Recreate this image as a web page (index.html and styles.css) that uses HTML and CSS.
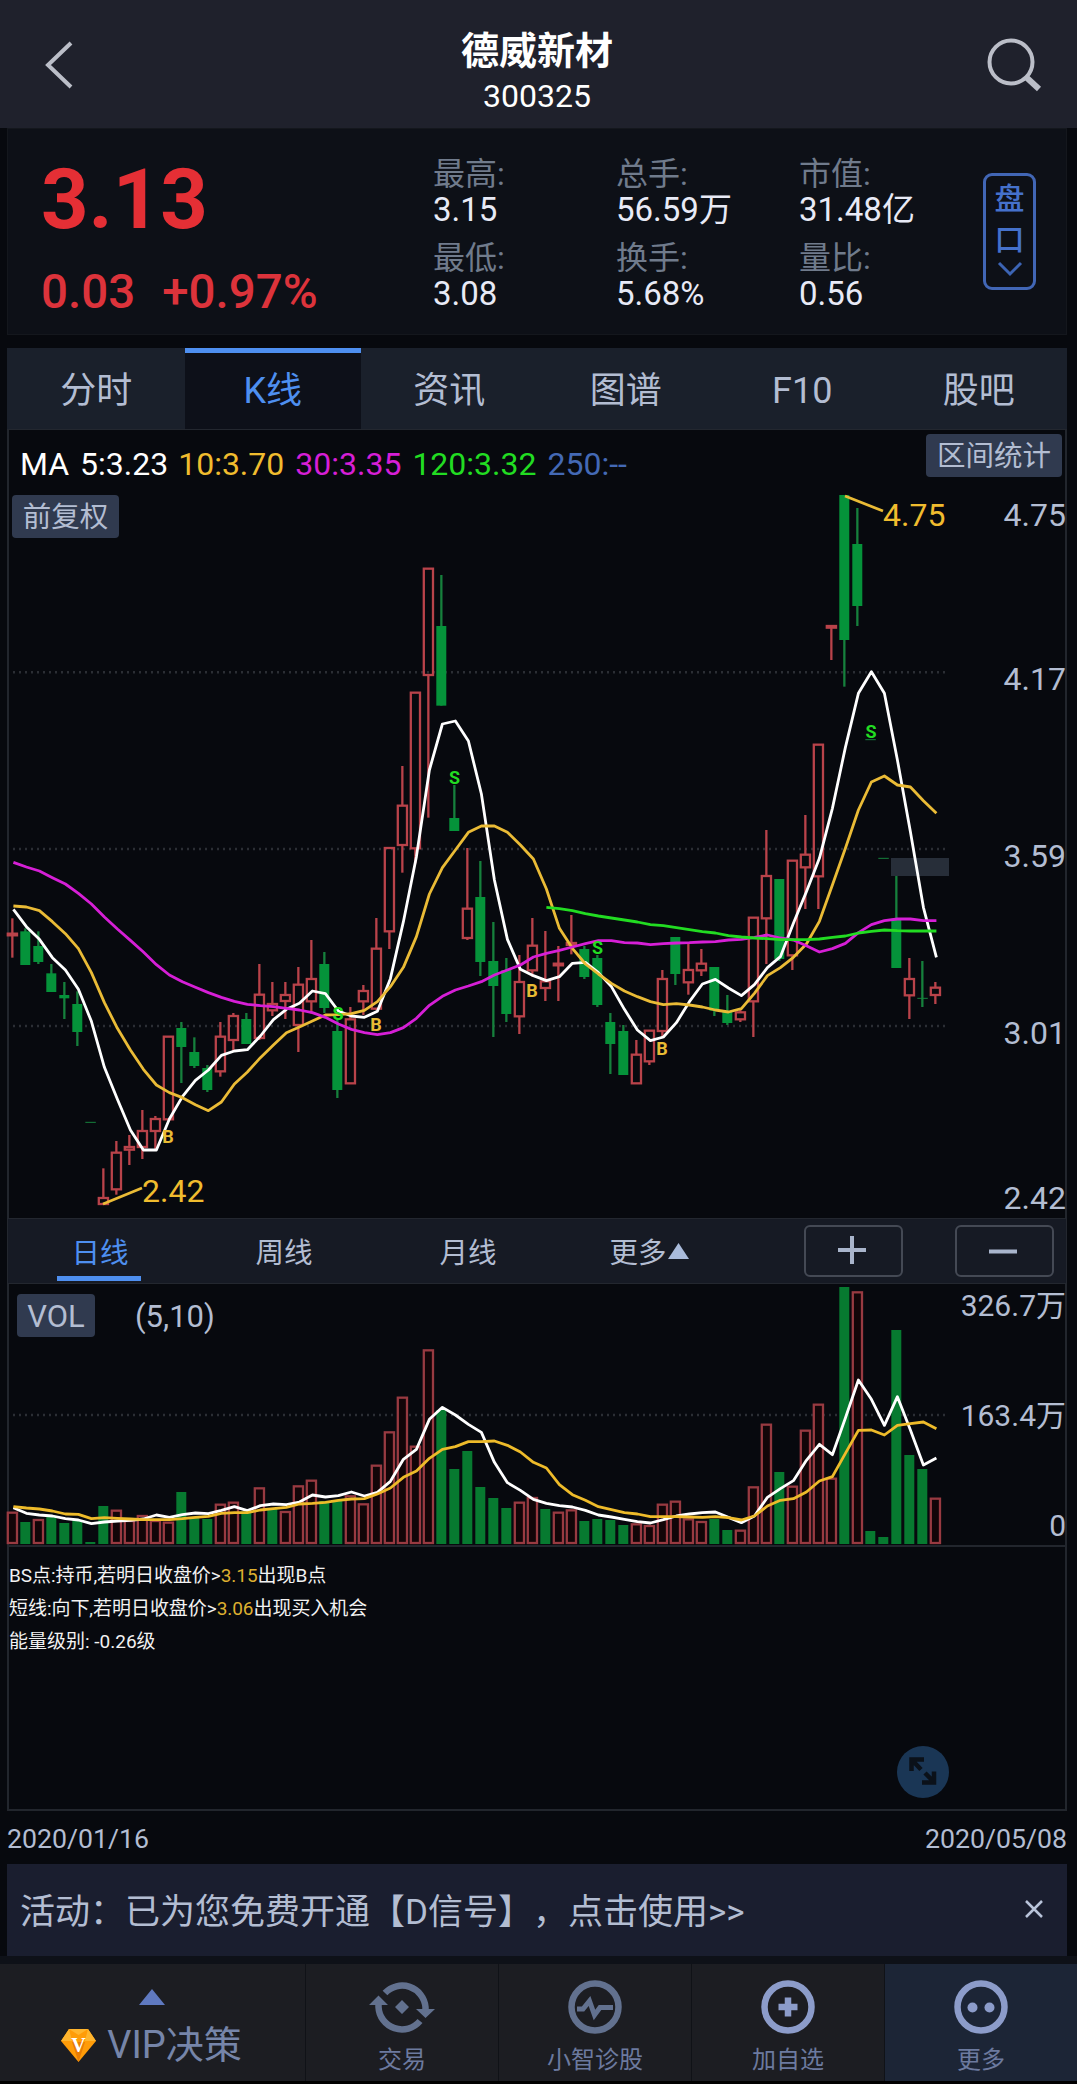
FILE: index.html
```html
<!DOCTYPE html>
<html lang="zh-CN">
<head>
  <meta charset="UTF-8" />
  <meta name="viewport" content="width=device-width, initial-scale=1.0" />
  <title>德威新材 300325</title>
  <link rel="stylesheet" href="styles.css">
</head>
<body>
  <!-- 顶部标题 -->
  <header class="topbar">
    <svg class="icon-back" width="28" height="48" viewBox="0 0 28 48"><path d="M26 2 L3 24 L26 46" /></svg>
    <div class="title">
      <h1>德威新材</h1>
      <p>300325</p>
    </div>
    <svg class="icon-search" width="56" height="54" viewBox="0 0 56 54">
      <circle cx="24" cy="24" r="21.5" />
      <path d="M39 39 L52 51" />
    </svg>
  </header>

  <main>
    <!-- 报价 -->
    <section class="quote">
      <div class="price">
        <div class="now">3.13</div>
        <div class="change"><span>0.03</span><span>+0.97%</span></div>
      </div>
      <dl class="stats">
        <div><dt>最高:</dt><dd>3.15</dd></div>
        <div><dt>总手:</dt><dd>56.59万</dd></div>
        <div><dt>市值:</dt><dd>31.48亿</dd></div>
        <div><dt>最低:</dt><dd>3.08</dd></div>
        <div><dt>换手:</dt><dd>5.68%</dd></div>
        <div><dt>量比:</dt><dd>0.56</dd></div>
      </dl>
      <button class="pankou">
        <span>盘</span><span>口</span>
        <svg width="26" height="16" viewBox="0 0 26 16"><path d="M2 2 L13 13 L24 2" /></svg>
      </button>
    </section>

    <!-- 标签页 -->
    <nav class="tabs">
      <a>分时</a>
      <a class="active">K线</a>
      <a>资讯</a>
      <a>图谱</a>
      <a>F10</a>
      <a>股吧</a>
    </nav>

    <!-- K线图 -->
    <section class="panel kline">
      <svg id="kChart" viewBox="9 430 1056 788"></svg>
      <div class="ma-row">
        <span class="ma5">MA 5:3.23</span>
        <span class="ma10">10:3.70</span>
        <span class="ma30">30:3.35</span>
        <span class="ma120">120:3.32</span>
        <span class="ma250">250:--</span>
      </div>
      <span class="badge badge-range">区间统计</span>
      <span class="badge badge-fq">前复权</span>
    </section>

    <!-- 周期 -->
    <section class="period">
      <a class="active">日线</a>
      <a>周线</a>
      <a>月线</a>
      <a>更多<svg width="21" height="16" viewBox="0 0 21 16"><path d="M10.5 0 L21 16 H0 Z" /></svg></a>
      <div class="zoom-btns">
        <button><svg width="28" height="28" viewBox="0 0 28 28"><path d="M14 0 V28 M0 14 H28" /></svg></button>
        <button><svg width="28" height="28" viewBox="0 0 28 28"><path d="M0 15.5 H28" /></svg></button>
      </div>
    </section>

    <!-- 成交量 -->
    <section class="panel volume">
      <svg id="vChart" viewBox="9 1284 1056 261"></svg>
      <div class="vol-row">
        <span class="badge badge-vol">VOL</span>
        <span>(5,10)</span>
      </div>
    </section>

    <!-- 提示信息 -->
    <section class="panel signals">
      <p>BS点:持币,若明日收盘价&gt;<em>3.15</em>出现B点</p>
      <p>短线:向下,若明日收盘价&gt;<em>3.06</em>出现买入机会</p>
      <p>能量级别: -0.26级</p>
      <svg class="expand" width="52" height="52" viewBox="0 0 52 52">
        <circle cx="26" cy="26" r="26" />
        <path d="M14.500 25 V13.500 H27 M15 14 L24 23.500 M37 25.500 V36.500 H25 M37 36 L28 27" />
      </svg>
    </section>

    <div class="dates"><span>2020/01/16</span><span>2020/05/08</span></div>

    <!-- 活动 -->
    <div class="promo">
      <span>活动：已为您免费开通【D信号】，点击使用&gt;&gt;</span>
      <svg width="18" height="18" viewBox="0 0 18 18"><path d="M1 1 L17 17 M17 1 L1 17" /></svg>
    </div>
  </main>

  <!-- 底部导航 -->
  <footer class="bottom">
    <a class="vip">
      <svg class="vip-up" width="26" height="16" viewBox="0 0 26 16"><path d="M13 0 L26 16 H0 Z" /></svg>
      <div>
        <svg width="35" height="33" viewBox="0 0 35 33">
          <path fill="#ff9c08" d="M8 0 H27 L35 12 L17.500 33 L0 12 Z" />
          <path fill="#ffb52e" d="M8 0 H27 L17.500 6 Z M0 12 L8 0 L11 12 Z M35 12 L27 0 L24 12 Z" />
          <path fill="#e87d05" d="M11 13 L17.500 33 L24 13 Z" />
          <text x="17.500" y="23" text-anchor="middle">V</text>
        </svg>
        <span>VIP决策</span>
      </div>
    </a>
    <a>
      <svg width="66" height="54" viewBox="0 0 66 54">
        <path d="M16 13 A23.500 23.500 0 0 1 56.500 27 V30 M51 41 A23.500 23.500 0 0 1 9.500 27 V24" />
        <path class="solid" d="M47 29 H66 L56.500 38 Z M0 25 H19 L9.500 15.500 Z M33 20 L40 27 L33 34 L26 27 Z" />
      </svg>
      <span>交易</span>
    </a>
    <a>
      <svg width="54" height="54" viewBox="0 0 54 54">
        <circle cx="27" cy="27" r="23.500" />
        <path class="pulse" d="M9 29 H15 L21.500 21 L26.500 35 L32 27.500 H45" />
      </svg>
      <span>小智诊股</span>
    </a>
    <a class="bright">
      <svg width="54" height="54" viewBox="0 0 54 54">
        <circle cx="27" cy="27" r="23.500" />
        <path d="M27 17.500 V36.500 M17.500 27 H36.500" />
      </svg>
      <span>加自选</span>
    </a>
    <a class="bright active">
      <svg width="54" height="54" viewBox="0 0 54 54">
        <circle cx="27" cy="27" r="23.500" />
        <circle class="solid" cx="18.500" cy="27.500" r="5" />
        <circle class="solid" cx="35.500" cy="27.500" r="5" />
      </svg>
      <span>更多</span>
    </a>
  </footer>

  <script src="chart.js"></script>
</body>
</html>
```
FILE: styles.css
```css
* {
  box-sizing: border-box;
}

body {
  margin: 0;
  background-color: #07090e;
  font-family: Roboto, 'Noto Sans CJK SC', sans-serif;
  color: #b3bdd2;
  height: 2084px;
  overflow: hidden;
}

h1, p, dl, dd {
  margin: 0;
}

svg {
  display: block;
  fill: none;
}

button {
  background: none;
  font-family: inherit;
  padding: 0;
}

/* 顶部标题 */
.topbar {
  height: 128px;
  background-color: #1f212c;
  display: flex;
  justify-content: space-between;
  align-items: center;
  padding: 2px 34px 0 45px;
  color: #ffffff;
}
.topbar svg {
  stroke: #bbbec8;
  stroke-width: 4;
}
.icon-search path {
  stroke-width: 6;
}
.title {
  text-align: center;
  margin-left: 14px;
  padding-top: 10px;
}
.title h1 {
  font-size: 38px;
  line-height: 52px;
  font-weight: 700;
}
.title p {
  font-size: 32px;
  line-height: 38px;
}

main {
  padding: 0 10px 0 7px;
}

/* 报价 */
.quote {
  height: 207px;
  background-color: #0d1017;
  border: 1px solid #14171d;
  display: flex;
  padding: 0 30px 0 33px;
}
.price {
  width: 392px;
  color: #e52f35;
}
.now {
  font-size: 83px;
  line-height: 84px;
  font-weight: 700;
  margin-top: 29px;
}
.change {
  display: flex;
  gap: 27px;
  font-size: 47.5px;
  line-height: 56px;
  font-weight: 500;
  margin-top: 22px;
  color: #dc333b;
}
.stats {
  flex: 1;
  display: grid;
  grid-template-columns: repeat(3, 183px);
  grid-template-rows: 84px 84px;
  padding-top: 27px;
}
.stats dt {
  font-size: 32px;
  line-height: 37px;
  height: 36px;
  color: #707b8c;
}
.stats dd {
  font-size: 33px;
  line-height: 36px;
  color: #e8eaf6;
}
.pankou {
  width: 53px;
  height: 117px;
  margin-top: 44px;
  border: 3px solid #4166b5;
  border-radius: 9px;
  color: #4571cb;
  font-size: 30px;
  font-weight: 500;
  display: flex;
  flex-direction: column;
  align-items: center;
}
.pankou span {
  line-height: 41px;
  height: 41px;
}
.pankou span:first-child {
  margin-top: 2px;
}
.pankou svg {
  stroke: #3c64b4;
  stroke-width: 3;
  margin-top: 1px;
}

/* 标签页 */
.tabs {
  display: flex;
  height: 82px;
  margin-top: 13px;
  padding-left: 1px;
  background-color: #1a202b;
  border-bottom: 1px solid #23272f;
}
.tabs a {
  flex: 1;
  text-align: center;
  font-size: 36px;
  line-height: 86px;
}
.tabs .active {
  color: #4e8ff0;
  background-color: #0d1019;
  border-top: 5px solid #4e8ff0;
  line-height: 76px;
}

/* 图表区 */
.panel {
  position: relative;
  border: 2px solid #22262d;
  border-top: none;
}
.panel > svg {
  overflow: visible;
}
.badge {
  background-color: #303a4f;
  border-radius: 4px;
  height: 43px;
  line-height: 46px;
  text-align: center;
  font-size: 28.5px;
}
.kline {
  height: 788px;
  border-bottom: none;
}
.kline svg {
  width: 1056px;
  height: 788px;
}
.ma-row {
  position: absolute;
  top: 14px;
  left: 11px;
  font-size: 32px;
  line-height: 40px;
  white-space: nowrap;
  display: flex;
  gap: 11px;
}
.ma5 { color: #ffffff; word-spacing: 3px; margin-right: -1px; }
.ma10 { color: #f0bc2e; }
.ma30 { color: #d61fd6; }
.ma120 { color: #22dc22; }
.ma250 { color: #4469b5; }
.badge-range {
  position: absolute;
  top: 4px;
  right: 3px;
  width: 136px;
}
.badge-fq {
  position: absolute;
  top: 65px;
  left: 3px;
  width: 107px;
}

/* 周期 */
.period {
  height: 66px;
  background-color: #161a24;
  border: 1px solid #23272f;
  display: flex;
  align-items: center;
}
.period a {
  width: 184px;
  height: 64px;
  line-height: 69px;
  text-align: center;
  font-size: 28.5px;
  position: relative;
  display: flex;
  justify-content: center;
}
.period a svg {
  fill: #a9bbdb;
  margin: 24px 6px 0 1px;
}
.period .active {
  color: #4e8ff0;
}
.period .active::after {
  content: "";
  position: absolute;
  left: 49px;
  bottom: 2px;
  width: 84px;
  height: 5px;
  background-color: #4e8ff0;
}
.zoom-btns {
  flex: 1;
  display: flex;
  gap: 52px;
  justify-content: flex-end;
  padding-right: 12px;
}
.zoom-btns button {
  width: 99px;
  height: 52px;
  border: 2px solid #444954;
  border-radius: 6px;
  display: flex;
  justify-content: center;
  align-items: center;
  padding: 0 4px 2px 0;
}
.zoom-btns svg {
  stroke: #a9b5cc;
  stroke-width: 4;
}

/* 成交量 */
.volume {
  height: 263px;
}
.volume svg {
  width: 1056px;
  height: 261px;
}
.vol-row {
  position: absolute;
  top: 10px;
  left: 8px;
  display: flex;
  gap: 40px;
  font-size: 31px;
  line-height: 46px;
}
.badge-vol {
  width: 78px;
  font-size: 31px;
}

/* 图内文字 */
.axis { fill: #b3bdd2; font-size: 32px; text-anchor: end; }
.axis.small { font-size: 30px; }
.mark { fill: #f0bc2e; font-size: 32px; }
.bs { font-size: 18px; font-weight: 700; text-anchor: middle; }

/* 提示信息 */
.signals {
  height: 264px;
  padding: 12px 0 0 0;
  color: #f2f2f2;
  font-size: 19px;
  line-height: 33px;
}
.signals em {
  font-style: normal;
  color: #deb030;
}
.signals p:not(:last-of-type) {
  letter-spacing: -0.05px;
}
.expand {
  position: absolute;
  right: 116px;
  bottom: 11px;
  fill: #1a3655;
}
.expand path {
  fill: none;
  stroke: #0b1119;
  stroke-width: 4.5;
}

.dates {
  height: 53px;
  display: flex;
  justify-content: space-between;
  font-size: 26.7px;
  line-height: 56px;
}

/* 活动 */
.promo {
  height: 92px;
  background-color: #1a1e2f;
  display: flex;
  justify-content: space-between;
  align-items: center;
  padding: 0 24px 3px 13px;
  font-size: 35px;
  text-spacing-trim: space-all;
}
.promo svg {
  stroke: #b9c4da;
  stroke-width: 2.5;
}

/* 底部导航 */
.bottom {
  display: flex;
  height: 128px;
  border-top: 8px solid #0e1118;
  border-bottom: 3px solid #000000;
  background-color: #1c1d22;
}
.bottom a {
  width: 193px;
  display: flex;
  flex-direction: column;
  align-items: center;
  border-left: 1px solid #101217;
  padding-top: 16px;
  color: #6c7a9f;
  font-size: 24px;
}
.bottom a > span {
  line-height: 30px;
  margin-top: 11px;
}
.bottom svg {
  stroke: #62718f;
  stroke-width: 6.5;
}
.bottom .solid {
  fill: #62718f;
  stroke: none;
}
.bottom .pulse {
  stroke-width: 5;
}
.bottom .bright svg {
  stroke: #8c9cca;
}
.bottom .bright .solid {
  fill: #8c9cca;
}
.bottom .active {
  background-color: #1c2536;
}
.bottom .vip {
  width: 305px;
  border-left: none;
  padding: 25px 2px 0 0;
  font-size: 38px;
  color: #7685a9;
}
.vip div {
  display: flex;
  align-items: center;
  gap: 11px;
  line-height: 46px;
  margin-top: 17px;
}
.bottom .vip svg {
  stroke: none;
}
.bottom .vip-up {
  fill: #5f79c0;
}
.vip text {
  fill: #ffffff;
  font: bold 20px 'Liberation Serif', serif;
}
```
FILE: chart.js
```js
const NS = 'http://www.w3.org/2000/svg';
const STEP = 13;
const RED = '#b9434a';
const GREEN = '#05933a';

// 每根K线: [颜色, 最高, 实体上沿, 实体下沿, 最低]，单位 1/3 像素，相对 y=820
// d = 一字线
const candles = [
  ['r', 295, 341, 346, 413], ['g', 325, 334, 435, 435], ['g', 334, 378, 426, 432], ['g', 432, 460, 516, 516],
  ['g', 486, 525, 535, 597], ['g', 514, 552, 636, 678], ['d', 907, 907, 907, 907], ['r', 1045, 1134, 1152, 1155],
  ['r', 963, 998, 1108, 1124], ['r', 945, 981, 989, 1035], ['r', 870, 933, 981, 1017], ['r', 888, 897, 933, 990],
  ['r', 650, 650, 898, 900], ['g', 606, 624, 681, 789], ['g', 652, 696, 738, 744], ['g', 735, 744, 810, 816],
  ['r', 606, 650, 754, 770], ['r', 579, 588, 660, 694], ['g', 579, 597, 672, 672], ['r', 432, 524, 654, 660],
  ['r', 486, 552, 571, 588], ['r', 486, 525, 543, 597], ['r', 441, 494, 615, 696], ['r', 360, 477, 544, 580],
  ['g', 396, 432, 564, 579], ['g', 600, 633, 810, 834], ['r', 561, 598, 790, 790], ['r', 495, 513, 544, 585],
  ['r', 294, 386, 566, 570], ['r', 82, 84, 334, 387], ['r', -162, -43, 75, 158], ['r', -382, -382, 85, 130],
  ['r', -754, -754, -435, -7], ['g', -735, -582, -343, -343], ['g', -105, -6, 33, 33], ['r', 84, 266, 354, 360],
  ['g', 123, 231, 426, 468], ['g', 306, 423, 498, 651], ['g', 414, 450, 582, 606], ['r', 405, 486, 589, 642],
  ['r', 294, 377, 451, 470], ['r', 333, 484, 504, 543], ['r', 378, 431, 436, 543], ['r', 285, 369, 375, 403],
  ['g', 378, 387, 471, 477], ['g', 405, 414, 555, 561], ['g', 579, 606, 672, 762], ['g', 615, 633, 765, 765],
  ['r', 660, 704, 790, 790], ['r', 632, 632, 724, 735], ['r', 450, 477, 633, 655], ['g', 351, 351, 462, 495],
  ['r', 372, 450, 487, 524], ['r', 387, 431, 451, 468], ['g', 441, 441, 572, 588], ['g', 525, 576, 609, 615],
  ['r', 570, 577, 598, 606], ['r', 293, 293, 544, 651], ['r', 30, 168, 295, 432], ['g', 177, 177, 417, 423],
  ['r', 122, 122, 406, 450], ['r', -15, 104, 142, 267], ['r', -226, -226, 169, 267], ['r', -582, -582, -577, -480],
  ['g', -975, -975, -540, -400], ['g', -936, -828, -642, -582], ['d', -241, -241, -241, -241], ['d', 115, 115, 115, 115],
  ['g', 165, 296, 444, 444], ['r', 414, 477, 526, 597], ['d', 423, 535, 535, 561], ['r', 486, 503, 525, 552]
];

const ma5 = [268, 320, 358, 413, 450, 508, 604, 742, 838, 930, 990, 990, 897, 830, 781, 750, 706, 693, 689, 648, 599, 568, 550, 513, 521, 573, 588, 592, 574, 476, 305, 110, -150, -288, -297, -237, -78, 180, 358, 448, 467, 482, 470, 430, 427, 458, 500, 568, 630, 662, 651, 608, 545, 492, 478, 504, 527, 494, 443, 410, 310, 215, 115, -35, -218, -380, -445, -380, -180, 35, 262, 412];
const ma10 = [258, 261, 272, 305, 341, 386, 458, 548, 625, 690, 748, 795, 818, 833, 854, 872, 846, 792, 756, 713, 675, 638, 621, 603, 585, 584, 581, 571, 545, 500, 442, 350, 222, 143, 90, 37, 18, 18, 37, 75, 117, 207, 325, 385, 432, 462, 490, 513, 530, 545, 554, 551, 555, 561, 570, 576, 566, 520, 467, 443, 412, 372, 304, 195, 85, -30, -114, -132, -105, -99, -58, -20];
const ma30 = [127, 141, 153, 173, 192, 220, 252, 291, 327, 361, 396, 434, 465, 485, 502, 518, 532, 544, 553, 557, 560, 565, 570, 578, 592, 612, 628, 638, 644, 638, 623, 595, 556, 529, 510, 498, 485, 465, 450, 435, 411, 400, 391, 381, 371, 362, 362, 368, 369, 374, 371, 369, 368, 366, 365, 360, 358, 352, 345, 354, 360, 377, 396, 386, 370, 338, 314, 302, 297, 297, 302, 302];
const ma120 = [262, 266, 272, 281, 288, 294, 300, 306, 314, 317, 323, 329, 335, 339, 347, 351, 354, 356, 359, 359, 359, 357, 352, 348, 339, 334, 330, 332, 333, 333, 333];

// 成交量柱顶，单位 1/3 像素，相对 y=1210
const vols = 'r905 g936 r927 g920 g939 g930 g996 g888 r899 r930 r915 r930 r935 g846 g922 g927 r881 r875 g905 r832 g897 r903 r826 r809 g873 g870 r856 r880 r764 r664 r560 r707 r418 g600 g777 g723 g831 g864 g894 r875 r861 g897 r905 r898 g933 g927 g930 g945 r940 r945 r881 r872 r925 r933 g927 g960 r959 r829 r641 g786 r827 r659 r581 r803 g231 r244 g963 g981 g360 g735 g777 r863'.split(' ');
const vma5 = [893, 910, 915, 918, 926, 930, 941, 936, 933, 931, 927, 915, 922, 914, 909, 911, 901, 890, 902, 887, 882, 884, 876, 855, 861, 857, 846, 858, 847, 814, 748, 718, 628, 592, 615, 643, 667, 757, 818, 841, 868, 880, 887, 891, 901, 915, 921, 928, 935, 939, 929, 918, 912, 908, 906, 922, 938, 918, 862, 836, 812, 751, 703, 734, 624, 510, 568, 646, 560, 660, 765, 744];
const vma10 = [890, 894, 897, 903, 912, 913, 926, 923, 925, 927, 929, 929, 929, 926, 922, 919, 910, 908, 908, 900, 896, 892, 882, 880, 877, 871, 867, 866, 852, 834, 802, 783, 745, 718, 710, 695, 695, 693, 706, 726, 757, 774, 824, 854, 871, 890, 899, 908, 912, 920, 920, 920, 921, 922, 920, 923, 930, 918, 888, 871, 866, 846, 813, 800, 730, 661, 660, 675, 646, 641, 636, 656];

const kChart = document.getElementById('kChart');
const vChart = document.getElementById('vChart');

function add(svg, tag, attrs, text) {
  const el = document.createElementNS(NS, tag);
  for (const k in attrs) el.setAttribute(k, attrs[k]);
  if (text) el.textContent = text;
  svg.appendChild(el);
}

function vline(svg, x, y1, y2, color) {
  if (y2 > y1) add(svg, 'rect', { x: x - 1.1, y: y1, width: 2.3, height: y2 - y1, fill: color });
}

function grid(svg, y) {
  add(svg, 'path', { d: `M13 ${y} H949`, stroke: '#2b2e34', 'stroke-width': 2.5, 'stroke-dasharray': '2 4' });
}

function line(svg, data, start, base, color) {
  const points = data.map((v, i) => `${13.4 + (start + i) * STEP},${base + v / 3}`).join(' ');
  add(svg, 'polyline', { points, stroke: color, 'stroke-width': 2.8, 'stroke-linejoin': 'round' });
}

// ── K线 ──
[672.3, 849, 1026].forEach(y => grid(kChart, y));

candles.forEach(([type, high, top, bottom, low], i) => {
  const x = 12.3 + i * STEP;
  const [h, t, b, l] = [high, top, bottom, low].map(v => 820 + v / 3);
  if (type === 'r') {
    vline(kChart, x, h, t, RED);
    vline(kChart, x, b, l, RED);
    add(kChart, 'rect', { x: x - 4.5, y: t, width: 9.2, height: b - t, stroke: RED, 'stroke-width': 2.3 });
  } else if (type === 'g') {
    vline(kChart, x, h, l, '#16803c');
    add(kChart, 'rect', { x: x - 5, y: t, width: 10, height: b - t, fill: GREEN });
  } else {
    vline(kChart, x, h, l, '#16803c');
    add(kChart, 'rect', { x: x - 5, y: t - 0.5, width: 10.5, height: 1, fill: '#16803c' });
  }
});

add(kChart, 'rect', { x: 891, y: 858, width: 58, height: 18, fill: '#272e39' });

line(kChart, ma5, 0, 820, '#ffffff');
line(kChart, ma10, 0, 820, '#eabb36');
line(kChart, ma30, 0, 820, '#d61fd6');
line(kChart, ma120, 41, 820, '#22dc22');

[[168, 1142.5], [376, 1030.5], [532, 997], [662, 1055]].forEach(([x, y]) => {
  add(kChart, 'text', { x, y, class: 'bs', fill: '#e8bb34' }, 'B');
});
[[338, 1020], [454.5, 784], [597.5, 954], [871, 738]].forEach(([x, y]) => {
  add(kChart, 'text', { x, y, class: 'bs', fill: '#22dc22' }, 'S');
});

add(kChart, 'path', { d: 'M845 496 L883 511 M103 1204 L142 1188', stroke: '#eabb36', 'stroke-width': 2.8 });
add(kChart, 'text', { x: 883, y: 525.7, class: 'mark' }, '4.75');
add(kChart, 'text', { x: 142, y: 1201.5, class: 'mark' }, '2.42');

[['4.75', 525.7], ['4.17', 689.5], ['3.59', 866.5], ['3.01', 1043.5], ['2.42', 1208.5]].forEach(([t, y]) => {
  add(kChart, 'text', { x: 1066, y, class: 'axis' }, t);
});

// ── 成交量 ──
grid(vChart, 1415);

vols.forEach((v, i) => {
  const x = 12.3 + i * STEP;
  const y = 1210 + v.slice(1) / 3;
  if (v[0] === 'r') {
    add(vChart, 'rect', { x: x - 4.5, y: y + 1, width: 9.2, height: 1543 - y - 1, stroke: '#983a41', 'stroke-width': 2.3, fill: '#120508' });
  } else {
    add(vChart, 'rect', { x: x - 5, y, width: 10, height: 1544 - y, fill: '#077a30' });
  }
});

line(vChart, vma5, 0, 1210, '#ffffff');
line(vChart, vma10, 0, 1210, '#eebb2a');

[['326.7万', 1316], ['163.4万', 1426], ['0', 1535.5]].forEach(([t, y]) => {
  add(vChart, 'text', { x: 1066, y, class: 'axis small' }, t);
});
```
